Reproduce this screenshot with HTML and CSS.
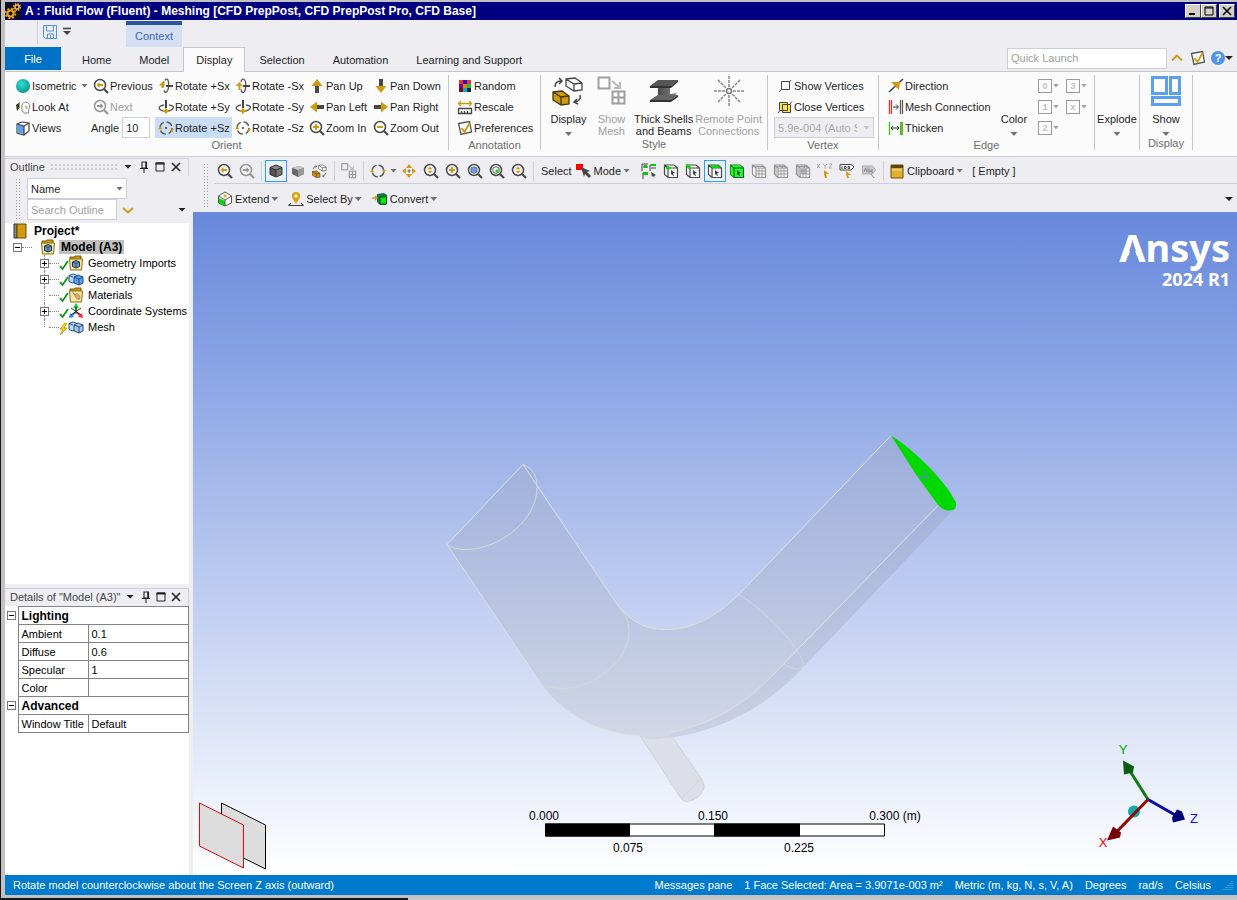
FILE: index.html
```html
<!DOCTYPE html>
<html lang="en">
<head>
<meta charset="utf-8">
<title>A : Fluid Flow (Fluent) - Meshing</title>
<link rel="stylesheet" href="styles.css">
</head>
<body>
<svg class="defs" aria-hidden="true">
  <defs>
    <radialGradient id="g-sphere" cx=".4" cy=".35" r=".7"><stop offset="0" stop-color="#2fe0d6"/><stop offset="1" stop-color="#0d8f8b"/></radialGradient>
    <linearGradient id="g-beam" x1="0" x2="1" y1="0" y2="0"><stop offset="0" stop-color="#333"/><stop offset="1" stop-color="#888"/></linearGradient>
    <symbol id="i-lens" viewBox="0 0 16 16"><circle cx="7" cy="7" r="5.5" fill="#fff" fill-opacity=".5" stroke="currentColor" stroke-width="1.5"/><path d="M10.8 10.8L15 15" stroke="currentColor" stroke-width="2.200"/></symbol>
    <symbol id="i-prev" viewBox="0 0 16 16"><use href="#i-lens"/><path d="M3.5 7l3-3v2h3.5v2H6.5v2z" fill="#cf9a10"/></symbol>
    <symbol id="i-next" viewBox="0 0 16 16"><use href="#i-lens"/><path d="M10.500 7l-3-3v2H4v2h3.500v2z" fill="currentColor"/></symbol>
    <symbol id="i-zin" viewBox="0 0 16 16"><use href="#i-lens"/><path d="M7 4v6M4 7h6" stroke="#cf9a10" stroke-width="2"/></symbol>
    <symbol id="i-zout" viewBox="0 0 16 16"><use href="#i-lens"/><path d="M4 7h6" stroke="#cf9a10" stroke-width="2"/></symbol>
    <symbol id="i-zud" viewBox="0 0 16 16"><use href="#i-lens"/><path d="M4.500 6.300L7 3.500l2.500 2.800zM4.500 7.700L7 10.500l2.500-2.800z" fill="#cf9a10"/></symbol>
    <symbol id="i-zbox" viewBox="0 0 16 16"><use href="#i-lens"/><path d="M4 5l3-1.200L10 5v4l-3 1.500L4 9z" fill="#6d9fe0" stroke="#456" stroke-width=".7"/></symbol>
    <symbol id="i-zgreen" viewBox="0 0 16 16"><use href="#i-lens"/><path d="M4 5l3-1.200L10 5v4l-3 1.500L4 9z" fill="#fff" stroke="#444" stroke-width=".8"/><path d="M6.500 6.500h3V9l-3 1z" fill="#2bd02b"/></symbol>
    <symbol id="i-rx" viewBox="0 0 16 16"><path d="M7 2.500C8 0 10 1 10.500 4s0 8-1.500 9.500-2.500.5-3-1M5.500 9c-.5-2 0-4 .5-5.500" fill="none" stroke="#555" stroke-width="1.300"/><path d="M8 8h7" stroke="#444" stroke-width="2"/><path d="M5 3L1 7.500h2.500V10h2V7.500H7z" fill="#cf9a10"/></symbol>
    <symbol id="i-rxn" viewBox="0 0 16 16"><path d="M6 4C6.500 1 8.500 0 10 2.500s.8 9-.5 11-3 1-3.500-2" fill="none" stroke="#555" stroke-width="1.300"/><path d="M8 8h7" stroke="#444" stroke-width="2"/><path d="M4.500 4l-4 4h3v4h2V8h2z" fill="#cf9a10"/></symbol>
    <symbol id="i-ry" viewBox="0 0 16 16"><path d="M6 6C2 6.500 0 8.500 2 10.500s9 2.500 12 0 1-4-3-4.500" fill="none" stroke="#555" stroke-width="1.300"/><path d="M8 1v8" stroke="#444" stroke-width="2"/><path d="M7 9v2H5v2h2v2.500l4-3.500-4-3.500z" fill="#cf9a10"/></symbol>
    <symbol id="i-rz" viewBox="0 0 16 16"><circle cx="8" cy="8" r="6" fill="none" stroke="#555" stroke-width="1.400" stroke-dasharray="6.400 3"/><circle cx="8" cy="8" r="1.100" fill="#444"/><path d="M0 9.500l2-3.500 2.500 3zM16 9l-2 3.500L11.500 10z" fill="#cf9a10"/></symbol>
    <symbol id="i-up" viewBox="0 0 16 16"><path d="M8 6v9" stroke="#484848" stroke-width="4"/><path d="M8 1l5.500 7h-11z" fill="#cf9a10"/></symbol>
    <symbol id="i-down" viewBox="0 0 16 16"><use href="#i-up" transform="rotate(180 8 8)"/></symbol>
    <symbol id="i-left" viewBox="0 0 16 16"><use href="#i-up" transform="rotate(-90 8 8)"/></symbol>
    <symbol id="i-right" viewBox="0 0 16 16"><use href="#i-up" transform="rotate(90 8 8)"/></symbol>
    <symbol id="i-pref" viewBox="0 0 16 16"><path d="M1.500 3.500L12.500 1.500 14.500 12 4 14.500z" fill="#fff" stroke="#555" stroke-width="1.300"/><path d="M4.500 8l3 4 5-9" fill="none" stroke="#cf9a10" stroke-width="1.800"/></symbol>
    <symbol id="i-cube" viewBox="0 0 16 16"><path d="M2 4.500L8 2l6 2.500v7L8 14l-6-2.500z" fill="#555"/><path d="M2 4.500L8 7l6-2.500L8 2z" fill="#888"/><path d="M8 7l6-2.500v7L8 14z" fill="#777"/><path d="M2 4.500L8 2l6 2.500v7L8 14l-6-2.500zM2 4.500L8 7l6-2.500M8 7v7" fill="none" stroke="#333"/></symbol>
    <symbol id="i-cube2" viewBox="0 0 16 16"><path d="M2 5l7-2 5 2v6l-6 3-6-3z" fill="#666"/><path d="M2 5l6 2 6-2-5-2z" fill="#c8c8c8"/><path d="M8 7l6-2v6l-6 3z" fill="#999"/></symbol>
    <symbol id="i-swap" viewBox="0 0 34 30"><path d="M14 3L23 1l7 6v7l-9 1-7-5z" fill="#fff"/><path d="M14 3l9-1 7 5v7l-8 1-8-5zM14 3l8 5 8-1M22 8v7" fill="none" stroke="#444" stroke-width="1.300"/><path d="M1 16l9-1 7 5v8l-8 1-8-5z" fill="#cf9a10" stroke="#443510" stroke-width="1.300"/><path d="M1 16l8 5 8-1M9 21v7" fill="none" stroke="#443510" stroke-width="1.300"/><path d="M3 11c0-4 2-6 6-6M7 2l3 3-3 3M28 19c1 4-1 6-5 7M25 23l-3 3 4 2" fill="none" stroke="#444" stroke-width="1.500"/></symbol>
    <symbol id="i-mesh" viewBox="0 0 30 30"><path d="M1.500 1.500h11v11h-11zM15.500 15.500h12v12h-12zM21.500 15v13M15 21.500h13" fill="none" stroke="currentColor" stroke-width="2"/><path d="M15 5l7 6M23 6v6h-6" fill="none" stroke="#bbb" stroke-width="2"/></symbol>
    <symbol id="i-body" viewBox="0 0 16 16"><path d="M1.500 2.500L11 1.500l3.500 3v10h-10l-3-3z" fill="#fff" fill-opacity=".6"/><path d="M1.500 2h9.500l3.500 3v9.500h-9.500l-3.500-3zM1.500 2L5 5h9.500M5 5v9.500" fill="none" stroke="currentColor" stroke-width="1.200"/></symbol>
    <symbol id="i-ptr" viewBox="0 0 16 16"><path d="M8 7l4 3-2 .5 1 2-1 .5-1-2-1 1z" fill="#444"/></symbol>
    <symbol id="i-sv" viewBox="0 0 16 16"><use href="#i-body"/><circle cx="5" cy="5" r="2" fill="#0d0"/><use href="#i-ptr"/></symbol>
    <symbol id="i-se" viewBox="0 0 16 16"><use href="#i-body"/><path d="M1.500 2L5 5" stroke="#0d0" stroke-width="3"/><use href="#i-ptr"/></symbol>
    <symbol id="i-sf" viewBox="0 0 16 16"><use href="#i-body"/><path d="M2.500 2.300h8.300L14 5H5.500z" fill="#0d0"/><use href="#i-ptr"/></symbol>
    <symbol id="i-sb" viewBox="0 0 16 16"><path d="M1.500 2h9.500l3.500 3v9.500h-9.500l-3.500-3z" fill="#0f0"/><use href="#i-body"/><path d="M1.500 2h9.500l3.500 3v9.500h-9.500l-3.500-3z" fill="#0f0" fill-opacity=".8"/><path d="M5 5h9.500v9.500H5zM1.500 2L5 5" fill="none" stroke="#254"/><use href="#i-ptr"/></symbol>
    <symbol id="i-sm" viewBox="0 0 16 16"><use href="#i-body"/><path d="M8 5v9M11 5v9M5 8h9M5 11h9M3 3.500h9" stroke="currentColor" stroke-width=".9"/></symbol>
    <symbol id="i-sm2" viewBox="0 0 16 16"><use href="#i-sm"/><path d="M3 4v8M6 2l4 3M9 2l4 3" stroke="currentColor"/></symbol>
    <symbol id="i-sm3" viewBox="0 0 16 16"><use href="#i-sm2"/><path d="M6 6h6v5H6z" fill="currentColor" opacity=".6"/></symbol>
    <symbol id="i-folder" viewBox="0 0 16 16"><path d="M2 4V2h5V1h6v3" fill="#cf9a10" stroke="#7b5a08"/><path d="M1.500 4h13l-1 11h-11z" fill="#f8e9a8" stroke="#8c6a10"/></symbol>
    <symbol id="i-fcube" viewBox="0 0 16 16"><use href="#i-folder"/><path d="M4.500 7l3.500-1.500L11.500 7v4.500L8 13l-3.500-1.500z" fill="#6c9ad0" stroke="#234"/><path d="M4.500 7L8 8.500 11.500 7M8 8.500V13" fill="none" stroke="#234" stroke-width=".8"/></symbol>
    <symbol id="i-fmat" viewBox="0 0 16 16"><use href="#i-folder"/><path d="M5 5.500l6 7" stroke="#557" stroke-width="1"/><ellipse cx="9.500" cy="9.500" rx="3" ry="2" transform="rotate(50 9.500 9.500)" fill="#e8ae70" stroke="#9a7040" stroke-width=".6"/></symbol>
    <symbol id="i-geo" viewBox="0 0 16 16"><path d="M1 4.500L5 3l4 1.500v6L5 12 1 10.500z" fill="#c4daf3" stroke="#234f80"/><path d="M6 6l4-2 5 2v6l-4 2-5-2z" fill="var(--geo,#5b9df0)" stroke="#234f80"/><path d="M6 6l5 2 4-2M11 8v6M1 4.500L5 6" fill="none" stroke="#234f80"/></symbol>
    <symbol id="i-check" viewBox="0 0 10 10"><path d="M1 6l2.500 3L9 1" fill="none" stroke="#0a9a1a" stroke-width="1.800"/></symbol>
    <symbol id="i-bolt" viewBox="0 0 10 12"><path d="M6 0L1 6h3l-3 6 7-7H5l3-5z" fill="#ffe000" stroke="#b08a00" stroke-width=".8"/></symbol>
    <symbol id="i-pin" viewBox="0 0 10 12"><path d="M3 1h4.500v6H3zM1 7.500h8M5 8v4M6.800 1v6" fill="none" stroke="#222" stroke-width="1.100"/></symbol>
    <symbol id="i-max" viewBox="0 0 10 10"><path d="M1 1h8v8H1z" fill="none" stroke="#222"/><path d="M.5 1.500h9" stroke="#222" stroke-width="2"/></symbol>
    <symbol id="i-close" viewBox="0 0 10 10"><path d="M1 1l8 8M9 1L1 9" stroke="#222" stroke-width="1.600"/></symbol>
  </defs>
</svg>

<div class="window">
  <header class="titlebar">
    <svg class="ic" viewBox="0 0 16 16"><path fill="#111" d="M0 0h16v16H0z"/><circle cx="5.500" cy="10.500" r="3" fill="none" stroke="#e8a020" stroke-width="2"/><circle cx="5.500" cy="10.500" r="4.800" fill="none" stroke="#e8a020" stroke-width="1.800" stroke-dasharray="2 1.770"/><circle cx="12" cy="4" r="2" fill="none" stroke="#f0b840" stroke-width="1.600"/><circle cx="12" cy="4" r="3.300" fill="none" stroke="#f0b840" stroke-width="1.400" stroke-dasharray="1.500 1.090"/></svg>
    <h1>A : Fluid Flow (Fluent) - Meshing [CFD PrepPost, CFD PrepPost Pro, CFD Base]</h1>
    <div class="winbtns">
      <button aria-label="Minimize"><svg viewBox="0 0 10 10"><path d="M1 8h6" stroke="#000" stroke-width="2"/></svg></button>
      <button aria-label="Maximize"><svg viewBox="0 0 10 10"><path d="M1 1h8v8H1zM1 2h8" fill="none" stroke="#000"/></svg></button>
      <button aria-label="Close"><svg viewBox="0 0 10 10"><path d="M1 1l8 8M9 1L1 9" stroke="#000" stroke-width="1.600"/></svg></button>
    </div>
  </header>

  <div class="quick">
    <div class="qa">
      <button aria-label="Save"><svg class="ic" viewBox="0 0 16 16"><path d="M1.500 1.500h13v13h-11l-2-2zM4.500 2v5h7V2M5.500 14v-4h6v4M8.500 11v3" fill="none" stroke="#4f90e0"/></svg></button>
      <button aria-label="Customize"><svg class="ic-s" viewBox="0 0 10 10"><path d="M1 1.500h8" stroke="#444" stroke-width="1.600"/><path d="M1 4h8L5 8z" fill="#444"/></svg></button>
    </div>
    <button class="context">Context</button>
  </div>

  <div class="tabrow">
    <nav class="tabs">
      <button class="file">File</button><button>Home</button><button>Model</button><button class="active">Display</button><button>Selection</button><button>Automation</button><button>Learning and Support</button>
    </nav>
    <div class="launch">
      <input type="text" placeholder="Quick Launch" aria-label="Quick Launch">
      <button aria-label="Collapse ribbon"><svg class="ic" viewBox="0 0 16 16"><path d="M3 10.500l5-5 5 5" fill="none" stroke="#cf9a10" stroke-width="1.800"/></svg></button>
      <button aria-label="Options"><svg class="ic"><use href="#i-pref"/></svg></button>
      <button class="help" aria-label="Help"><span class="q">?</span><i class="caret dark"></i></button>
    </div>
  </div>

  <div class="ribbon">
    <section class="group">
      <div class="orient">
        <button><svg class="ic" viewBox="0 0 16 16"><circle cx="8" cy="8" r="7" fill="url(#g-sphere)"/></svg>Isometric<i class="caret push"></i></button>
        <button><svg class="ic"><use href="#i-prev"/></svg>Previous</button>
        <button><svg class="ic"><use href="#i-rx"/></svg>Rotate +Sx</button>
        <button><svg class="ic"><use href="#i-rxn"/></svg>Rotate -Sx</button>
        <button><svg class="ic"><use href="#i-up"/></svg>Pan Up</button>
        <button><svg class="ic"><use href="#i-down"/></svg>Pan Down</button>
        <button><svg class="ic" viewBox="0 0 16 16"><path d="M1 6l4-3v5L2 12z" fill="#333"/><path d="M4.500 4v4l-1 1" stroke="#cf9a10" fill="none"/><path d="M7 6c1-4 7-4 7.500 1 .2 3-1.500 4-1 7H9.500l-2.500-2z" fill="#fff" stroke="#888"/><path d="M10 7l2 1-1 2" fill="none" stroke="#888"/></svg>Look At</button>
        <button disabled><svg class="ic"><use href="#i-next"/></svg>Next</button>
        <button><svg class="ic"><use href="#i-ry"/></svg>Rotate +Sy</button>
        <button><svg class="ic"><use href="#i-ry"/></svg>Rotate -Sy</button>
        <button><svg class="ic"><use href="#i-left"/></svg>Pan Left</button>
        <button><svg class="ic"><use href="#i-right"/></svg>Pan Right</button>
        <button><svg class="ic" viewBox="0 0 16 16"><path d="M2 4l5-2 7 1v8l-5 4-7-2z" fill="#fff" stroke="#444" stroke-width="1.200"/><path d="M2.500 4.500L9 6v8l-6.500-1.500z" fill="#5b9ff0"/><path d="M2 4l7 2 5-3M9 6v9" fill="none" stroke="#444" stroke-width="1.200"/></svg>Views</button>
        <label class="angle">Angle <input type="text" value="10"></label>
        <button class="on"><svg class="ic"><use href="#i-rz"/></svg>Rotate +Sz</button>
        <button><svg class="ic"><use href="#i-rz"/></svg>Rotate -Sz</button>
        <button><svg class="ic"><use href="#i-zin"/></svg>Zoom In</button>
        <button><svg class="ic"><use href="#i-zout"/></svg>Zoom Out</button>
      </div>
      <h2>Orient</h2>
    </section>
    <section class="group">
      <div class="stack annotation">
        <button><svg class="ic" viewBox="0 0 16 16"><path fill="#e33" d="M2 2h4v4H2zM10 2h4v4h-4z"/><path fill="#30c" d="M6 2h4v4H6z"/><path fill="#808" d="M2 6h4v4H2z"/><path fill="#d80" d="M6 6h4v4H6z"/><path fill="#2b4" d="M10 6h4v4h-4z"/><path fill="#711" d="M2 10h4v4H2z"/><path fill="#0ad" d="M6 10h4v4H6z"/><path fill="#123" d="M10 10h4v4h-4z"/></svg>Random</button>
        <button><svg class="ic" viewBox="0 0 16 16"><path d="M2 4.500h12M4 2L1.500 4.500 4 7M12 2l2.500 2.500L12 7" fill="none" stroke="#cf9a10" stroke-width="1.300"/><path d="M1.500 9.500h13v5h-13zM4.500 12v2M7.500 12v2M10.500 12v2" fill="none" stroke="#444" stroke-width="1.300"/></svg>Rescale</button>
        <button><svg class="ic"><use href="#i-pref"/></svg>Preferences</button>
      </div>
      <h2>Annotation</h2>
    </section>
    <section class="group">
      <div class="bigs">
        <button class="big"><svg class="bi"><use href="#i-swap"/></svg>Display<i class="caret"></i></button>
        <button class="big" disabled><svg class="bi"><use href="#i-mesh"/></svg>Show<br>Mesh</button>
        <button class="big"><svg class="bi" viewBox="0 0 34 30"><path d="M3 12l14-8h14l-8 6v8l7-1-6 8H3l8-6v-7z" fill="url(#g-beam)"/><path d="M3 10l8-6h20l-7 6z" fill="#555"/><path d="M3 24l8-5h20l-7 5z" fill="#666"/><path d="M3 10h21l7-6v2l-7 6H3zM3 24h21l7-5v2l-7 5H3z" fill="#333"/></svg>Thick Shells<br>and Beams</button>
        <button class="big" disabled><svg class="bi" viewBox="0 0 34 30"><path d="M17 0v11M17 19v11M2 15h11M21 15h11M6 4l8 8M28 4l-8 8M6 26l8-8M28 26l-8-8" stroke="#888" stroke-width="1.500" stroke-dasharray="3 1"/><circle cx="17" cy="15" r="2.500" fill="none" stroke="#777" stroke-width="1.500"/></svg>Remote Point<br>Connections</button>
      </div>
      <h2>Style</h2>
    </section>
    <section class="group">
      <div class="stack vertex">
        <button><svg class="ic" viewBox="0 0 16 16"><path d="M4.500 3.500h8v8h-8zM2 14l2.500-2.500M12.500 3.500L14 2" fill="none" stroke="#444"/></svg>Show Vertices</button>
        <button><svg class="ic" viewBox="0 0 16 16"><path d="M2.500 3.500h8v8h-8zM5.500 5.500h8v8h-8z" fill="#f7e34d"/><path d="M2.500 3.500h8v8h-8zM5.500 5.500h8v8h-8zM1 14l2-2.500M13 5l2-2.500" fill="none" stroke="#444"/></svg>Close Vertices</button>
        <span class="selwrap"><select disabled aria-label="Vertex tolerance"><option>5.9e-004 (Auto Scale)</option></select><i class="caret"></i></span>
      </div>
      <h2>Vertex</h2>
    </section>
    <section class="group">
      <div class="edge">
        <div class="stack">
          <button><svg class="ic" viewBox="0 0 16 16"><path d="M1 14L15 1" stroke="#444" stroke-width="1.600"/><path d="M3 4l9 0-1 8z" fill="#cf9a10"/></svg>Direction</button>
          <button><svg class="ic" viewBox="0 0 16 16"><path d="M1.500 1v14M3.500 1v14" stroke="#f22" stroke-width="1.200"/><path d="M12.500 1v14M14.500 1v14" stroke="#555" stroke-width="1.200"/><path d="M5 8h5M8 5.500l2.500 2.500L8 10.500" stroke="#333" fill="none"/></svg>Mesh Connection</button>
          <button><svg class="ic" viewBox="0 0 16 16"><path d="M1.500 2v13" stroke="#5b2" stroke-width="1.400"/><path d="M13.500 2v13" stroke="#5b2" stroke-width="3"/><path d="M3 8h8M5 6L3 8l2 2M9 6l2 2-2 2" stroke="#333" fill="none"/></svg>Thicken</button>
        </div>
        <button class="big low">Color<i class="caret"></i></button>
        <div class="nums">
          <button disabled><b>0</b><i class="caret"></i></button><button disabled><b>3</b><i class="caret"></i></button>
          <button disabled><b>1</b><i class="caret"></i></button><button disabled><b>x</b><i class="caret"></i></button>
          <button disabled><b>2</b><i class="caret"></i></button>
        </div>
      </div>
      <h2>Edge</h2>
    </section>
    <section class="group narrow"><button class="big low">Explode<i class="caret"></i></button></section>
    <section class="group show">
      <button class="big"><svg class="bi" viewBox="0 0 30 30"><path d="M1.500 1.500h14v16h-14zM19.500 1.500h9v16h-9zM1.500 21.500h27v7h-27z" fill="none" stroke="#5b9ff0" stroke-width="3"/></svg>Show<i class="caret"></i></button>
      <h2>Display</h2>
    </section>
  </div>

  <main class="work">
    <aside class="side">
      <section class="outline">
        <header class="panelhead"><h3>Outline</h3><span class="dots"></span><button aria-label="Outline menu"><i class="caret dark"></i></button><button aria-label="Pin outline"><svg class="pin"><use href="#i-pin"/></svg></button><button aria-label="Maximize outline"><svg class="ic-s"><use href="#i-max"/></svg></button><button aria-label="Close outline"><svg class="ic-s"><use href="#i-close"/></svg></button></header>
        <div class="filter">
          <span class="vgrip"></span>
          <div class="fields">
            <span class="selwrap"><select aria-label="Filter by"><option>Name</option></select><i class="caret"></i></span>
            <div class="frow"><input type="text" placeholder="Search Outline" aria-label="Search Outline"><svg class="ic" viewBox="0 0 16 16"><path d="M3 6l5 4.500L13 6" fill="none" stroke="#cf9a10" stroke-width="1.800"/></svg><i class="caret dark push"></i></div>
          </div>
        </div>
        <ul class="tree">
          <li class="t0"><svg class="ic" viewBox="0 0 16 16"><path d="M2 1h3v14H2z" fill="#888" stroke="#333"/><path d="M5 1h9v14H5z" fill="#cf9a10" stroke="#6b4d06"/></svg><strong>Project*</strong></li>
          <li class="t1"><button class="exp minus" aria-label="Collapse"></button><span class="dash"></span><svg class="ic"><use href="#i-fcube"/></svg><strong class="sel">Model (A3)</strong></li>
          <li class="t2"><button class="exp plus" aria-label="Expand"></button><span class="dash"></span><svg class="st"><use href="#i-check"/></svg><svg class="ic"><use href="#i-fcube"/></svg><span>Geometry Imports</span></li>
          <li class="t2"><button class="exp plus" aria-label="Expand"></button><span class="dash"></span><svg class="st"><use href="#i-check"/></svg><svg class="ic"><use href="#i-geo"/></svg><span>Geometry</span></li>
          <li class="t2"><i class="exp none"></i><span class="dash"></span><svg class="st"><use href="#i-check"/></svg><svg class="ic"><use href="#i-fmat"/></svg><span>Materials</span></li>
          <li class="t2"><button class="exp plus" aria-label="Expand"></button><span class="dash"></span><svg class="st"><use href="#i-check"/></svg><svg class="ic" viewBox="0 0 16 16"><path d="M8 10V4" stroke="#1c2" stroke-width="2"/><path d="M8 0l3 5H5z" fill="#1c2"/><path d="M8 9l-5 4" stroke="#28f" stroke-width="2"/><path d="M1 15l1-5 4 4z" fill="#28f"/><path d="M8 9l5 4" stroke="#f33" stroke-width="2"/><path d="M15 15l-1-5-4 4z" fill="#f33"/><path d="M3 5l10 7M13 5L3 12M8 4v6" stroke="#333"/></svg><span>Coordinate Systems</span></li>
          <li class="t2 last"><i class="exp none"></i><span class="dash"></span><svg class="st"><use href="#i-bolt"/></svg><svg class="ic pale"><use href="#i-geo"/></svg><span>Mesh</span></li>
        </ul>
      </section>
      <section class="details">
        <header class="panelhead"><h3>Details of "Model (A3)"</h3><button aria-label="Details menu"><i class="caret dark"></i></button><button aria-label="Pin details"><svg class="pin"><use href="#i-pin"/></svg></button><button aria-label="Maximize details"><svg class="ic-s"><use href="#i-max"/></svg></button><button aria-label="Close details"><svg class="ic-s"><use href="#i-close"/></svg></button></header>
        <table>
          <colgroup><col class="c0"><col class="c1"><col></colgroup>
          <tr><td class="gut"><button class="exp minus" aria-label="Collapse Lighting"></button></td><th colspan="2">Lighting</th></tr>
          <tr><td class="gut"></td><td>Ambient</td><td>0.1</td></tr>
          <tr><td class="gut"></td><td>Diffuse</td><td>0.6</td></tr>
          <tr><td class="gut"></td><td>Specular</td><td>1</td></tr>
          <tr><td class="gut"></td><td>Color</td><td></td></tr>
          <tr><td class="gut"><button class="exp minus" aria-label="Collapse Advanced"></button></td><th colspan="2">Advanced</th></tr>
          <tr><td class="gut"></td><td>Window Title</td><td>Default</td></tr>
        </table>
      </section>
    </aside>

    <section class="stage">
      <div class="toolbars">
        <span class="vgrip"></span>
        <div class="bars">
          <div class="bar">
            <button class="tb" aria-label="Previous view"><svg class="ic"><use href="#i-prev"/></svg></button>
            <button class="tb" disabled aria-label="Next view"><svg class="ic"><use href="#i-next"/></svg></button>
            <i class="sep"></i>
            <button class="tb sel" aria-label="Shaded with edges"><svg class="ic"><use href="#i-cube"/></svg></button>
            <button class="tb" aria-label="Shaded"><svg class="ic"><use href="#i-cube2"/></svg></button>
            <button class="tb" aria-label="Display style"><svg class="ic"><use href="#i-swap"/></svg></button>
            <i class="sep"></i>
            <button class="tb gray" aria-label="Show mesh"><svg class="ic"><use href="#i-mesh"/></svg></button>
            <i class="sep"></i>
            <button class="tb" aria-label="Rotate"><svg class="ic" viewBox="0 0 16 16"><circle cx="8" cy="8" r="5.800" fill="none" stroke="#555" stroke-width="1.500" stroke-dasharray="7 2.100"/><path d="M0 9l2-3 2 3zM16 7l-2 3-2-3z" fill="#cf9a10"/></svg></button>
            <i class="caret arrowcol"></i>
            <button class="tb" aria-label="Pan"><svg class="ic" viewBox="0 0 16 16"><path d="M8 1l3 4H5zM8 15l3-4H5zM1 8l4-3v6zM15 8l-4-3v6z" fill="#cf9a10"/><path d="M8 6.500v3M6.500 8h3" stroke="#555"/></svg></button>
            <button class="tb" aria-label="Zoom"><svg class="ic"><use href="#i-zud"/></svg></button>
            <button class="tb" aria-label="Zoom in"><svg class="ic"><use href="#i-zin"/></svg></button>
            <button class="tb" aria-label="Zoom to fit"><svg class="ic"><use href="#i-zbox"/></svg></button>
            <button class="tb" aria-label="Zoom to selection"><svg class="ic"><use href="#i-zgreen"/></svg></button>
            <button class="tb" aria-label="Magnifier"><svg class="ic"><use href="#i-zud"/></svg></button>
            <i class="sep"></i>
            <span class="lbl">Select</span>
            <button class="drop mode"><svg class="ic" viewBox="0 0 16 16"><path d="M0 1h7v6H0z" fill="#f00"/><path d="M5 4l9 4-3 1 4 4-2 2-4-4-1 3z" fill="#444"/></svg>Mode<i class="caret"></i></button>
            <button class="tb" aria-label="Auto select"><svg class="ic" viewBox="0 0 16 16"><path d="M1 1h6M1 1v7M9 2h6M9 2v6M2 10h5M2 10v6M2 4h5M10 5h5" stroke="#444"/><path d="M3 2h3v3H3zM10 1h5v2h-5zM2 9h5v3H2z" fill="#0c0"/><path d="M10 9l5 3-2 1 1 2-2-2-1 1z" fill="#444"/></svg></button>
            <button class="tb" aria-label="Vertex"><svg class="ic"><use href="#i-sv"/></svg></button>
            <button class="tb" aria-label="Edge"><svg class="ic"><use href="#i-se"/></svg></button>
            <button class="tb sel" aria-label="Face"><svg class="ic"><use href="#i-sf"/></svg></button>
            <button class="tb" aria-label="Body"><svg class="ic"><use href="#i-sb"/></svg></button>
            <button class="tb gray" aria-label="Node"><svg class="ic"><use href="#i-sm"/></svg></button>
            <button class="tb gray" aria-label="Element face"><svg class="ic"><use href="#i-sm2"/></svg></button>
            <button class="tb gray" aria-label="Element"><svg class="ic"><use href="#i-sm3"/></svg></button>
            <button class="tb" aria-label="Coordinates"><svg class="ic" viewBox="0 0 16 16"><path d="M0 1l3 4M3 1L0 5M6 1l2 2 2-2M8 3v3M12 1h3l-3 4h3" stroke="#999" fill="none" stroke-width=".8"/><path d="M7 7l5 4-3 0 1 4-2 0-1-4z" fill="#cf9a10"/></svg></button>
            <button class="tb" aria-label="Annotate"><svg class="ic" viewBox="0 0 16 16"><path d="M1 1.500h11L15 4l-3 3H1z" fill="#fff" stroke="#444"/><path d="M3 3v3M5.500 3.500h1.500v2H5.500zM9 3.500h1.500v2H9z" stroke="#444" fill="none"/><path d="M7 8l5 4-3 0 1 3-2 0-1-4z" fill="#cf9a10"/></svg></button>
            <button class="tb gray" aria-label="Label"><svg class="ic" viewBox="0 0 16 16"><path d="M1.500 3h10l3 4-3 4H1.500z" fill="#ccc" stroke="#aaa"/><path d="M3 9l1.500-4L6 9M7 4.500V9h2V7H7M12 7h-2v2h2M10 11l3 4" stroke="#888" fill="none"/></svg></button>
            <i class="sep"></i>
            <button class="drop clip"><svg class="ic" viewBox="0 0 16 16"><path d="M2 2h12v13H2z" fill="#e2b030" stroke="#6b4d06"/><path d="M2 2h12v3H2z" fill="#5a4510"/><path d="M3 7h10" stroke="#f3dc90"/></svg>Clipboard<i class="caret"></i></button>
            <span class="lbl">[ Empty ]</span>
          </div>
          <div class="bar second">
            <button class="drop"><svg class="ic" viewBox="0 0 16 16"><path d="M1.500 5L8 1l6.500 4v7L8 15l-6.500-3z" fill="#fff" stroke="#555"/><path d="M2 7l6 3v5l-6-3z" fill="#0d0"/><path d="M1.500 5L8 9l6.500-4M8 9v6" fill="none" stroke="#555"/><path d="M8 3v4M6 5h4" stroke="#cf9a10"/></svg>Extend<i class="caret"></i></button>
            <button class="drop"><svg class="ic" viewBox="0 0 16 16"><path d="M8 1c5 0 5 5 2.500 8L8 13 5.500 9C3 6 3 1 8 1z" fill="#d9a414"/><circle cx="8" cy="5" r="1.600" fill="#fff"/><path d="M3 12l-2 2.500h14L13 12" fill="none" stroke="#444" stroke-width="1.200"/></svg>Select By<i class="caret"></i></button>
            <button class="drop"><svg class="ic" viewBox="0 0 16 16"><path d="M5 3l7-1 3 2v8l-1 2H8l-3-3z" fill="#174"/><path d="M8 6h6.500v7H8z" fill="#0e0" stroke="#143"/><path d="M0 7h4M3 5l2 2-2 2" stroke="#cf9a10" fill="none" stroke-width="1.300"/></svg>Convert<i class="caret"></i></button>
            <i class="caret dark push"></i>
          </div>
        </div>
      </div>

      <div class="viewport">
        <svg class="scene" viewBox="193 212 1044 662" preserveAspectRatio="xMidYMid meet">
          <defs>
            <linearGradient id="g-pipe" gradientUnits="userSpaceOnUse" x1="0" y1="430" x2="0" y2="740"><stop offset="0" stop-color="#9aacdb"/><stop offset=".55" stop-color="#b8c4e1"/><stop offset="1" stop-color="#d3d8e7"/></linearGradient>
            <linearGradient id="g-shade" gradientUnits="userSpaceOnUse" x1="0" y1="510" x2="0" y2="740"><stop offset="0" stop-color="#a3b3dc"/><stop offset="1" stop-color="#ccd2e3"/></linearGradient>
          </defs>
          <path d="M938 505L952 511 802 668Q790 682 763 702 720 730 672 737L652 738 640 734 670 732 724 710 784 663Z" fill="url(#g-shade)"/>
          <path d="M640 735L681 798Q683 801 687 801C697 800 705 791 704 785L702 779 672 736Z" fill="#dcdfe8"/>
          <path d="M523 464C532 468 537 476 537 487L609 592C624 614 637 629 666 629 692 629 715 617 739 594L891 435 938 505 784 663C745 705 716 722 670 732L672 737 652 738 640 735C600 734 560 712 541 683L447 544Z" fill="url(#g-pipe)"/>
          <g fill="none" stroke="#dedfe0">
            <path d="M640 735C600 734 560 712 541 683L447 544 523 464 609 592C624 614 637 629 666 629 692 629 715 617 739 594L891 435M938 505L784 663C745 705 716 722 670 732"/>
            <path d="M523 464C533 468 537 476 537 487 537 520 499 549 466 549Q454 549 447 544M615 602C625 613 629 620 629 630 630 660 593 688 563 688Q550 688 541 683M739 594C763 609 787 634 797 650Q804 661 803 665C803 670 790 669 784 663" stroke="#d6d7d8"/>
            <path d="M640 736l12 2 20-2M682 797l18-18M640 735L681 798Q683 801 687 801C697 800 705 791 704 785L702 779 672 736" stroke="#d0d3d9"/>
          </g>
          <path d="M891 435C915 450 946 481 956 502Q957 510 950 510C944 510 940 508 934 499L916 474Z" fill="#00d900"/>
          <path d="M918 476.500h12M924.500 470v12" stroke="#5a8ad0"/>

          <path d="M221.500 802.500l44 22v44l-44-22z" fill="#ddd" stroke="#000"/>
          <path d="M199.500 802.500l44 22v43l-44-22z" fill="#ddd" stroke="#f00"/>

          <path d="M545.500 823.500h339v12h-339z" fill="#fff" stroke="#000"/>
          <path d="M545 823h85v13h-85zM714 823h86v13h-86z" fill="#000"/>
          <g class="scale" text-anchor="middle"><text x="544" y="819">0.000</text><text x="713" y="819">0.150</text><text x="895" y="819">0.300 (m)</text><text x="628" y="851">0.075</text><text x="799" y="851">0.225</text></g>

          <circle cx="1134" cy="811" r="6" fill="#14a8a8"/>
          <path d="M1148 799L1129 769" stroke="#117a17" stroke-width="3"/><path d="M1123 760l11 6-1 6-9 2z" fill="#0a5c10"/>
          <path d="M1148 799L1176 815" stroke="#0909b0" stroke-width="3"/><path d="M1185 819l-12 3-1-5 5-8 5 2z" fill="#000078"/>
          <path d="M1148 799L1115 833" stroke="#8f0909" stroke-width="3"/><path d="M1107 840l6-14 8 6-1 5z" fill="#700"/>
          <g class="axis" text-anchor="middle"><text x="1123" y="753" fill="#0a0">Y</text><text x="1194" y="822" fill="#11e">Z</text><text x="1103" y="846" fill="#e00">X</text></g>
        </svg>
        <div class="brand"><span class="ansys">Ansys</span><span class="ver">2024 R1</span></div>
      </div>
    </section>
  </main>

  <footer class="status">
    <span class="hint">Rotate model counterclockwise about the Screen Z axis (outward)</span>
    <span>Messages pane</span>
    <span>1 Face Selected: Area = 3.9071e-003 m²</span>
    <span>Metric (m, kg, N, s, V, A)</span><span>Degrees</span><span>rad/s</span><span>Celsius</span>
    <svg class="grip" viewBox="0 0 10 10"><path d="M9 1v9M7 3v7M5 5v5M3 7v3M1 9v1" stroke="#6bb5ea" stroke-dasharray="1 1"/></svg>
  </footer>
</div>
</body>
</html>
```
FILE: styles.css
```css
* { box-sizing: border-box; }
body {
  margin: 0;
  height: 100vh;
  background: linear-gradient(90deg, #16181c 33%, #c8c8c8 33%);
  font: 11px/14px "Liberation Sans", Arial, sans-serif;
  color: #1e1e1e;
  overflow: hidden;
}
button, input, select { font: inherit; color: inherit; margin: 0; padding: 0; border: 0; background: none; border-radius: 0; outline: 0; }
button { display: flex; align-items: center; white-space: nowrap; }
button:disabled { color: #a0a0a0; }
h1, h2, h3, ul { margin: 0; padding: 0; font: inherit; list-style: none; }
svg { display: block; flex: none; }
.defs { position: absolute; width: 0; height: 0; }
.ic { width: 16px; height: 16px; color: #4a4a4a; }
button:disabled .ic, .gray .ic { color: #959595; }
.ic-s { width: 10px; height: 10px; }
.pin { width: 10px; height: 12px; }
.caret { flex: none; width: 7px; height: 4px; background: #707070; clip-path: polygon(0 0, 100% 0, 50% 100%); }
.caret.dark { width: 8px; background: #1e1e1e; }
.push { margin-left: auto; }
input::placeholder { color: #a0a0a0; opacity: 1; }

.window {
  height: calc(100vh - 2px);
  margin-left: 1px;
  display: flex;
  flex-direction: column;
  background: #eeeef2;
  border: solid #c3c1c1;
  border-width: 2px 0 3px 4px;
}

.titlebar { display: flex; align-items: center; height: 18px; background: #000080; color: #fff; flex: none; }
.titlebar h1 { flex: 1; margin-left: 4px; font-weight: bold; font-size: 12px; }
.winbtns { display: flex; padding-right: 2px; }
.winbtns button { width: 16px; height: 14px; justify-content: center; background: #d4d0c8; border: 1px solid; border-color: #fff #404040 #404040 #fff; }
.winbtns button:last-child { margin-left: 2px; }
.winbtns svg { width: 10px; height: 10px; }

.quick { display: flex; height: 27px; padding-top: 1px; flex: none; }
.qa { display: flex; align-items: flex-start; gap: 4px; width: 89px; height: 23px; margin-left: 32px; padding: 3px 0 0 4px; border-left: 1px solid #ccceda; }
.qa button:last-child { height: 16px; }
.context { width: 56px; height: 26px; justify-content: center; color: #3c66b0; background: #d5dff2; border-top: 4px solid #2b579a; }

.tabrow { display: flex; justify-content: space-between; height: 25px; border-bottom: 1px solid #c6c6c8; flex: none; }
.tabs { display: flex; height: 25px; }
.tabs button { padding: 0 14px; }
.tabs .file { width: 56px; height: 23px; justify-content: center; background: #0072c6; color: #fff; margin-right: 7px; }
.tabs .active { background: #fbfbfb; border: 1px solid #c6c6c8; border-bottom: 0; padding: 0 12px; }
.launch { display: flex; align-items: center; gap: 5px; padding: 0 4px 2px 0; }
.launch input { width: 160px; height: 21px; padding: 0 3px; margin-right: -3px; background: #fff; border: 1px solid #ccceda; }
.help { gap: 0; }
.q { width: 14px; height: 14px; border-radius: 50%; background: #4f94ee; color: #fff; font-weight: bold; text-align: center; }

.ribbon { display: flex; height: 85px; padding-top: 3px; background: #fbfbfb; border-bottom: 1px solid #d0d0d4; flex: none; }
.group { display: flex; flex-direction: column; align-items: center; height: 75px; border-right: 1px solid #c6c6c8; flex: none; }
.group h2 { margin-top: auto; height: 15px; color: #6d6d6d; }
.group button .ic { margin-right: 1px; }
.orient { display: grid; grid-template-columns: 78px 65px 77px 74px 64px 78px; grid-auto-rows: 21px; padding-left: 7px; }
.orient button { padding: 0 0 0 3px; }
.orient .push { margin-right: 2px; }
.orient .on { background: #c9def5; }
.angle { display: flex; align-items: center; gap: 3px; padding-left: 1px; }
.angle input { width: 28px; height: 21px; padding: 0 3px; background: #fff; border: 1px solid #ccceda; }
.stack { display: grid; grid-auto-rows: 21px; justify-items: start; }
.annotation { width: 91px; padding-left: 8px; }
.bigs { display: flex; padding: 1px 5px 0 7px; gap: 2px; }
.big { flex-direction: column; line-height: 12px; }
.bigs .big { min-width: 41px; }
.big .caret { margin-top: 7px; }
.bi { width: 34px; height: 30px; margin-bottom: 7px; }
.vertex { width: 110px; padding-left: 6px; }
.vertex button { padding-left: 3px; }
.selwrap { display: flex; align-items: center; position: relative; width: 100px; }
.selwrap select { width: 100px; height: 21px; padding: 0 16px 0 3px; appearance: none; background: #fff; border: 1px solid #ccceda; opacity: 1; }
.selwrap select:disabled { color: #a8a8b0; background: #eeeef2; }
.selwrap .caret { position: absolute; right: 4px; }
.vertex .caret { background: #c4c4cc; }
.edge { display: flex; padding-left: 9px; width: 215px; }
.edge .stack { width: 106px; }
.big.low { padding-top: 38px; }
.edge .low { margin-left: 6px; width: 28px; }
.nums { display: grid; grid-template-columns: 28px 28px; grid-auto-rows: 21px; margin-left: 10px; }
.nums b { width: 14px; height: 14px; margin-right: 1px; border: 1px solid #999; font-size: 9px; line-height: 12px; text-align: center; color: #c4c4c4; }
.nums .caret { width: 6px; background: #a0a0a0; }
.narrow { width: 45px; }
.show { width: 53px; padding-top: 1px; }

.work { flex: 1; display: flex; min-height: 0; gap: 4px; padding-top: 1px; }
.side { width: 184px; display: flex; flex-direction: column; gap: 4px; flex: none; }
.outline { flex: 1; display: flex; flex-direction: column; }
.panelhead { display: flex; align-items: center; gap: 4px; height: 18px; padding: 0 6px 2px 5px; border: solid #ccceda; border-width: 1px 1px 0 0; color: #444; }
.panelhead h3 { white-space: nowrap; }
.panelhead button { width: 12px; height: 12px; justify-content: center; }
.panelhead button:nth-last-child(4) { margin-left: auto; }
.dots { flex: 1; height: 6px; background: conic-gradient(#aaa 25%, transparent 0) 0 0 / 4px 4px; opacity: .5; }
.vgrip { width: 5px; background: radial-gradient(circle, #a8a8a8 35%, transparent 40%) 0 0 / 3px 3px; }
.filter { display: flex; height: 47px; padding: 2px 0 3px 10px; gap: 7px; flex: none; }
.fields { flex: 1; }
.frow { display: flex; align-items: center; gap: 3px; padding-right: 3px; }
.frow input { width: 90px; height: 21px; padding: 0 3px; background: #fff; border: 1px solid #ccceda; }
.tree { flex: 1; background: #fff; }
.tree li { display: flex; align-items: center; height: 16px; color: #000; position: relative; white-space: nowrap; }
.tree strong { font-size: 12px; }
.t0 { padding-left: 8px; gap: 6px; }
.t1 { padding-left: 8px; }
.t2 { padding-left: 35px; }
.t2::before { content: ""; position: absolute; left: 39px; top: 0; height: 16px; border-left: 1px dotted #888; }
.t2.last::before { height: 8px; }
.exp { position: relative; width: 9px; height: 9px; flex: none; border: 1px solid #777; background: linear-gradient(#000, #000) center / 5px 1px no-repeat, #fff; }
.exp.plus { background: linear-gradient(#000, #000) center / 5px 1px no-repeat, linear-gradient(#000, #000) center / 1px 5px no-repeat, #fff; }
.exp.none { border: 0; background: none; }
.dash { width: 10px; border-top: 1px dotted #888; }
.t1 .dash { margin-right: 9px; }
.st { width: 10px; height: 12px; align-self: flex-end; }
.tree .ic { margin-left: -1px; }
.t2 .ic { margin-right: 4px; }
.t1 .sel { margin-left: 3px; padding: 0 2px; background: #c0c0c0; }
.pale { --geo: #a9c6ea; }
.details { height: 287px; display: flex; flex-direction: column; background: #fff; }
.details .panelhead { background: #eeeef2; flex: none; }
table { width: 100%; border-collapse: collapse; table-layout: fixed; color: #000; }
.c0 { width: 13px; }
.c1 { width: 70px; }
td, th { height: 18px; padding: 0 3px; line-height: 14px; border: 1px solid #848484; text-align: left; white-space: nowrap; }
th { font-size: 12px; }
.gut { padding: 0 0 0 2px; border: 0; }

.stage { flex: 1; min-width: 0; display: flex; flex-direction: column; }
.toolbars { display: flex; height: 54px; padding: 5px 0 5px 10px; gap: 6px; flex: none; }
.bars { flex: 1; margin: -5px 0; }
.bar { display: flex; align-items: center; height: 26px; border-bottom: 1px solid #ccceda; }
.bar.second { border: 0; height: 28px; padding: 2px 4px 0 3px; gap: 5px; }
.tb { width: 22px; height: 22px; justify-content: center; flex: none; }
.tb.sel { border: 1px solid #3399ff; background: #eaf2fb; }
.sep { width: 1px; height: 20px; margin: 0 3px; background: #ccceda; flex: none; }
.arrowcol { margin: 0 1px; }
.lbl { padding: 0 4px; white-space: nowrap; }
.drop { gap: 2px; padding-right: 5px; }
.mode { padding-right: 8px; }
.clip { padding-left: 2px; }

.viewport { position: relative; flex: 1; min-height: 0; background: linear-gradient(#6788dc, #fff); overflow: hidden; }
.scene { width: 100%; height: 100%; }
.scale { font-size: 12px; fill: #000; }
.axis { font-size: 13px; }
.brand { position: absolute; top: 14px; right: 7px; display: flex; flex-direction: column; align-items: flex-end; color: #fff; }
.ansys { position: relative; font: bold 38px/42px "Noto Sans", "Open Sans", sans-serif; }
.ansys::before { content: ""; position: absolute; left: 7px; top: 17px; width: 13px; height: 20px; background: #7190de; clip-path: polygon(50% 0, 100% 100%, 0 100%); }
.ver { font: bold 18px/18px "Noto Sans", "Open Sans", sans-serif; margin-top: 2px; }

.status { display: flex; align-items: center; gap: 12px; height: 20px; padding: 0 4px 0 8px; background: #007acc; color: #fff; white-space: nowrap; flex: none; }
.hint { flex: 1; }
.grip { width: 10px; height: 10px; }
```
